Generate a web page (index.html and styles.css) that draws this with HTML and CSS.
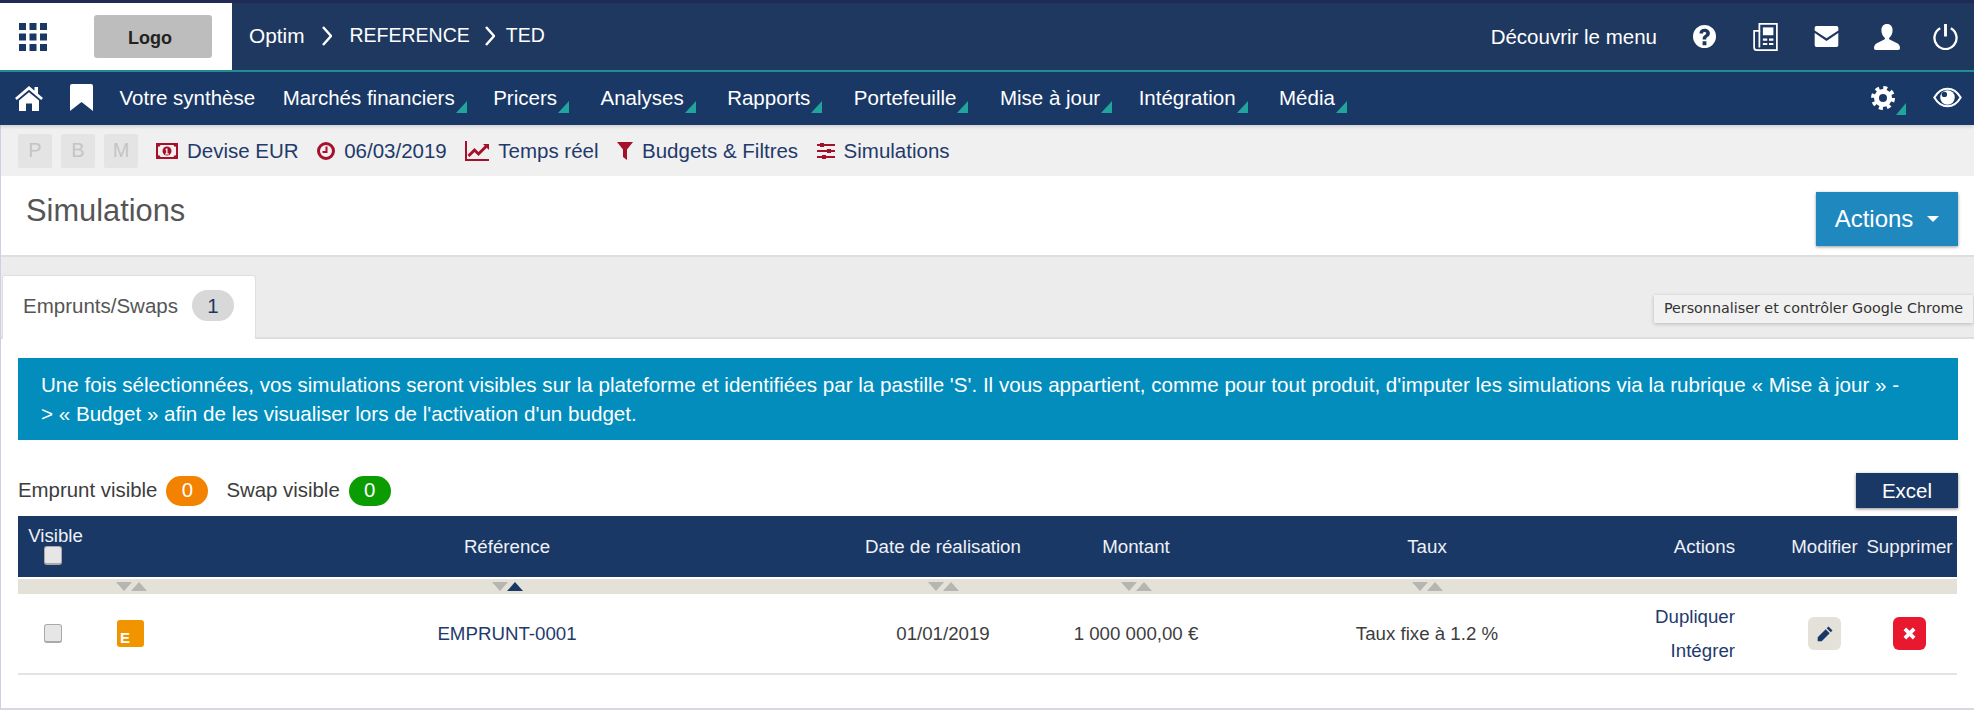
FILE: index.html
```html
<!DOCTYPE html>
<html lang="fr">
<head>
  <meta charset="UTF-8">
  <title>Simulations</title>
  <link rel="stylesheet" href="styles.css">
</head>
<body>
  <div class="page">
    <div class="topbar">
      <div class="brand">
        <svg class="grid-icon" viewBox="0 0 28 28" fill="#1a3866">
          <rect x="0" y="0" width="7" height="7"/><rect x="10.5" y="0" width="7" height="7"/><rect x="21" y="0" width="7" height="7"/>
          <rect x="0" y="10.5" width="7" height="7"/><rect x="10.5" y="10.5" width="7" height="7"/><rect x="21" y="10.5" width="7" height="7"/>
          <rect x="0" y="21" width="7" height="7"/><rect x="10.5" y="21" width="7" height="7"/><rect x="21" y="21" width="7" height="7"/>
        </svg>
        <div class="logo">Logo</div>
      </div>
      <div class="crumbs">
        <span class="crumb-first">Optim</span>
        <svg class="chevron" viewBox="0 0 10 20"><path d="M1 1l8 9-8 9"/></svg>
        <span>REFERENCE</span>
        <svg class="chevron" viewBox="0 0 10 20"><path d="M1 1l8 9-8 9"/></svg>
        <span>TED</span>
      </div>
      <div class="top-tools">
        <span class="discover">Découvrir le menu</span>
        <svg class="tool-help" viewBox="0 0 24 24"><path fill="#fff" fill-rule="evenodd" d="M12 0a12 12 0 1 0 0 24a12 12 0 0 0 0-24zM10 17h4v4h-4zM6.6 8.6C7 5.5 9.300 4 12.200 4c3 0 5.400 1.900 5.400 4.600 0 2.300-1.300 3.200-2.500 4-1 .7-1.300 1.100-1.300 2.400h-3.800c0-2.400.7-3.400 2.100-4.400 1-.7 1.700-1.100 1.700-2 0-.8-.7-1.400-1.700-1.400-1.100 0-1.800.7-2 1.900z"/></svg>
        <svg class="tool-news" viewBox="0 0 28 32" fill="none" stroke="#fff" stroke-width="2"><path d="M7 1h20v30H4a3 3 0 0 1-3-3V9h6z"/><path d="M7 9v19"/><rect x="11" y="5" width="12" height="9" fill="#fff" stroke="none"/><path d="M11 19h5M18 19h5M11 24h5M18 24h5" stroke-width="2.500"/></svg>
        <svg class="tool-mail" viewBox="0 0 27 24"><path fill="#fff" d="M2 0h23a2 2 0 0 1 2 2v3L13.500 14 0 5V2a2 2 0 0 1 2-2z"/><path fill="#fff" d="M0 8l13.500 9L27 8v14a2 2 0 0 1-2 2H2a2 2 0 0 1-2-2z"/></svg>
        <svg class="tool-user" viewBox="0 0 26 26"><path fill="#fff" d="M13 0c3.600 0 5.600 2.700 5.600 6.200 0 3-1.300 6-3.200 7.500-.6.500-.5 1.500.3 1.900l7 3.300c2 1 3.300 2.500 3.300 5.100 0 1.200-.6 2-2 2H2c-1.400 0-2-.8-2-2 0-2.600 1.300-4.100 3.300-5.100l7-3.300c.8-.4.900-1.400.3-1.900C8.700 12.200 7.400 9.200 7.400 6.200 7.400 2.700 9.400 0 13 0z"/></svg>
        <svg class="tool-power" viewBox="0 0 26 28" fill="none" stroke="#fff" stroke-width="2.400"><path d="M7.500 5.500a11.500 11.500 0 1 0 11 0"/><path d="M13 1v13" stroke-width="3"/></svg>
      </div>
    </div>

    <div class="nav">
      <svg class="nav-home" viewBox="0 0 28 26"><path fill="#fff" d="M14 1L0 13l1.800 2L14 4.700 26.200 15l1.800-2-5-4.300V2h-3.500v3.700z"/><path fill="#fff" d="M14 7.200L4 15.600V26h7v-7.500h6V26h7V15.600z"/></svg>
      <svg class="nav-mark" viewBox="0 0 23 27"><path fill="#fff" d="M2 0h19a2 2 0 0 1 2 2v25l-11.500-9L0 27V2a2 2 0 0 1 2-2z"/></svg>
      <a class="nav-plain">Votre synthèse</a>
      <a class="nav-item tight">Marchés financiers</a>
      <a class="nav-item">Pricers</a>
      <a class="nav-item">Analyses</a>
      <a class="nav-item">Rapports</a>
      <a class="nav-item">Portefeuille</a>
      <a class="nav-item tight">Mise à jour</a>
      <a class="nav-item">Intégration</a>
      <a class="nav-item">Média</a>
      <div class="nav-right">
        <span class="nav-gear">
          <svg viewBox="0 0 24 24" fill="none" stroke="#fff"><circle cx="12" cy="12" r="6.500" stroke-width="5"/><circle cx="12" cy="12" r="10" stroke-width="4" stroke-dasharray="3.900 3.950"/></svg>
        </span>
        <svg class="nav-eye" viewBox="0 0 28 20"><path fill="none" stroke="#fff" stroke-width="2" d="M1.300 10C4.500 4.500 9 1.500 14 1.500S23.500 4.500 26.700 10C23.500 15.500 19 18.500 14 18.500S4.500 15.500 1.300 10z"/><circle cx="14" cy="10" r="7" fill="#fff"/><circle cx="11" cy="7" r="2.600" fill="#1a3866"/></svg>
      </div>
    </div>

    <div class="subbar">
      <span class="square">P</span>
      <span class="square">B</span>
      <span class="square">M</span>
      <span class="sub-item first">
        <svg class="ic-money" viewBox="0 0 22 16"><path fill="#a5112b" fill-rule="evenodd" d="M0 0h22v16H0zM2 3.500v9A2 2 0 0 1 4.500 14h13a2 2 0 0 1 2.500-1.500v-9A2 2 0 0 1 17.500 2h-13A2 2 0 0 1 2 3.500z"/><circle cx="11" cy="8" r="4.500" fill="#a5112b"/><path fill="#fff" d="M10 5.500h1.500v5H13V11.500H9v-1h1.200V6.800l-1 .5z"/></svg>
        Devise EUR
      </span>
      <span class="sub-item">
        <svg class="ic-clock" viewBox="0 0 18 18" fill="none" stroke="#a5112b"><circle cx="9" cy="9" r="7.500" stroke-width="3"/><path d="M9.500 4.500V10H5.500" stroke-width="2"/></svg>
        06/03/2019
      </span>
      <span class="sub-item">
        <svg class="ic-chart" viewBox="0 0 24 20" fill="none" stroke="#a5112b"><path d="M1 0v19h23" stroke-width="2"/><path d="M3.500 15l6-6 4 4 8-8" stroke-width="3"/><path d="M18 3h6v6z" fill="#a5112b" stroke="none"/></svg>
        Temps réel
      </span>
      <span class="sub-item">
        <svg class="ic-filter" viewBox="0 0 16 18"><path fill="#a5112b" d="M0 0h16L10 7.500V18L6 15V7.500z"/></svg>
        Budgets &amp; Filtres
      </span>
      <span class="sub-item">
        <svg class="ic-sliders" viewBox="0 0 18 18"><path fill="none" stroke="#a5112b" stroke-width="2" d="M0 3h18M0 9h18M0 15h18"/><path fill="#a5112b" d="M3 1h4v4H3zM10 7h4v4h-4zM5 13h4v4H5z"/></svg>
        Simulations
      </span>
    </div>

    <div class="title-row">
      <h1>Simulations</h1>
      <button class="actions-btn">Actions <span class="caret"></span></button>
    </div>

    <div class="tabs">
      <div class="tab">Emprunts/Swaps <span class="tab-count">1</span></div>
      <div class="tooltip">Personnaliser et contrôler Google Chrome</div>
    </div>

    <div class="content">
      <div class="notice">Une fois sélectionnées, vos simulations seront visibles sur la plateforme et identifiées par la pastille 'S'. Il vous appartient, comme pour tout produit, d'imputer les simulations via la rubrique « Mise à jour » -<br>&gt; « Budget » afin de les visualiser lors de l'activation d'un budget.</div>

      <div class="counts">
        <span>Emprunt visible</span><span class="pill orange">0</span>
        <span class="swap-label">Swap visible</span><span class="pill green">0</span>
        <button class="excel-btn">Excel</button>
      </div>

      <table class="grid">
        <colgroup>
          <col class="c-visible"><col class="c-type"><col class="c-ref"><col class="c-date"><col class="c-amount"><col class="c-rate"><col class="c-actions"><col class="c-edit"><col class="c-del">
        </colgroup>
        <thead>
          <tr class="head">
            <th class="th-visible">Visible<span class="check"></span></th>
            <th></th>
            <th>Référence</th>
            <th>Date de réalisation</th>
            <th>Montant</th>
            <th>Taux</th>
            <th class="th-actions">Actions</th>
            <th>Modifier</th>
            <th>Supprimer</th>
          </tr>
          <tr class="sorts">
            <td></td>
            <td><span class="sort"><i class="down"></i><i class="up"></i></span></td>
            <td><span class="sort"><i class="down"></i><i class="up on"></i></span></td>
            <td><span class="sort"><i class="down"></i><i class="up"></i></span></td>
            <td><span class="sort"><i class="down"></i><i class="up"></i></span></td>
            <td><span class="sort"><i class="down"></i><i class="up"></i></span></td>
            <td></td><td></td><td></td>
          </tr>
        </thead>
        <tbody>
          <tr class="row">
            <td><span class="check"></span></td>
            <td><span class="type-badge">E</span></td>
            <td class="link">EMPRUNT-0001</td>
            <td>01/01/2019</td>
            <td>1 000 000,00 €</td>
            <td>Taux fixe à 1.2 %</td>
            <td class="td-actions"><a>Dupliquer</a><a>Intégrer</a></td>
            <td>
              <span class="square-btn edit">
                <svg viewBox="0 0 16 16"><path fill="#1a3866" d="M11.500 0.500l4 4-1.800 1.800-4-4zM8.700 3.300l4 4-8 8H.7v-4z"/></svg>
              </span>
            </td>
            <td>
              <span class="square-btn del">
                <svg viewBox="0 0 14 14"><path fill="none" stroke="#fff" stroke-width="4" d="M2 2l10 10M12 2L2 12"/></svg>
              </span>
            </td>
          </tr>
        </tbody>
      </table>
    </div>
  </div>
</body>
</html>
```

FILE: styles.css
```css
* {
  box-sizing: border-box;
}
html, body {
  margin: 0;
  height: 100%;
  overflow: hidden;
}
body {
  font-family: "Liberation Sans", Arial, sans-serif;
  font-size: 18.7px;
  color: #3d3d3d;
  background-color: white;
}
.page {
  height: 710px;
  border-left: 1px solid #cfcfe0;
  border-bottom: 2px solid #d8d8e2;
  display: flex;
  flex-direction: column;
}
svg {
  display: block;
  flex: none;
}

/* top bar */
.topbar {
  height: 72px;
  background-color: #1f3860;
  border-top: 3px solid #1f2a55;
  border-bottom: 2px solid #1e8f92;
  display: flex;
  align-items: center;
  color: white;
  font-size: 19.500px;
  margin-left: -1px;
}
.brand {
  width: 232px;
  height: 100%;
  background-color: white;
  display: flex;
  align-items: center;
  padding-left: 19px;
}
.grid-icon {
  width: 28px;
  height: 28px;
}
.logo {
  width: 118px;
  height: 43px;
  margin-left: 47px;
  padding: 3px 6px 0 0;
  background-color: #bdbdbd;
  border-radius: 3px;
  color: #222;
  font-size: 18px;
  font-weight: bold;
  display: flex;
  align-items: center;
  justify-content: center;
}
.crumbs {
  display: flex;
  align-items: center;
  margin-left: 17px;
  margin-bottom: 2px;
}
.crumb-first {
  font-size: 20.800px;
}
.chevron {
  width: 10px;
  height: 20px;
  margin: 0 17px 0 18px;
  fill: none;
  stroke: white;
  stroke-width: 2.400;
}
.chevron + span + .chevron {
  margin: 0 11px 0 15px;
}
.top-tools {
  margin-left: auto;
  display: flex;
  align-items: center;
  padding-right: 16px;
}
.discover {
  font-size: 20.500px;
  margin-right: 36px;
}
.tool-help { width: 23px; height: 23px; margin-right: 36px; }
.tool-news { width: 27px; height: 28px; margin-right: 34px; }
.tool-mail { width: 27px; height: 21px; margin-right: 34px; }
.tool-user { width: 26px; height: 26px; margin-right: 33px; }
.tool-power { width: 25px; height: 27px; }

/* menu */
.nav {
  height: 53px;
  margin-left: -1px;
  background-color: #1a3866;
  display: flex;
  align-items: center;
  color: white;
  font-size: 20.500px;
  padding: 0 0 2px 15px;
  box-shadow: 0 2px 3px rgba(0,0,0,0.12);
  position: relative;
}
.nav-home { width: 28px; height: 26px; margin-right: 27px; }
.nav-mark { width: 23px; height: 27px; margin-right: 26.500px; }
.nav-plain { margin-right: 27.500px; }
.nav-item {
  position: relative;
  margin-right: 43.500px;
}
.nav-item.tight {
  margin-right: 38.500px;
}
.nav-item::after {
  content: "";
  position: absolute;
  right: -12px;
  bottom: -3px;
  border-bottom: 12px solid #1fa59b;
  border-left: 11px solid transparent;
}
.nav-right {
  margin-left: auto;
  display: flex;
  align-items: center;
  padding-right: 12px;
}
.nav-gear {
  position: relative;
  margin-right: 38px;
}
.nav-gear svg {
  width: 24px;
  height: 24px;
}
.nav-gear::after {
  content: "";
  position: absolute;
  right: -11px;
  bottom: -5px;
  border-bottom: 12px solid #1fa59b;
  border-left: 10px solid transparent;
}
.nav-eye { width: 29px; height: 21px; }

/* sub bar */
.subbar {
  height: 51px;
  background-color: #f0f0f0;
  display: flex;
  align-items: center;
  padding-left: 17px;
  color: #1f3a6b;
  font-size: 20.500px;
}
.square {
  width: 34px;
  height: 34px;
  margin-right: 9px;
  background-color: #e4e4e4;
  border-radius: 2px;
  color: #c4c4c4;
  display: flex;
  align-items: center;
  justify-content: center;
  font-size: 20px;
}
.sub-item {
  display: flex;
  align-items: center;
  margin-right: 18.500px;
}
.sub-item svg {
  margin-right: 9px;
}
.sub-item.first {
  margin-left: 9px;
}
.ic-money { width: 22px; height: 16px; }
.ic-clock { width: 18px; height: 18px; }
.ic-chart { width: 24px; height: 20px; }
.ic-filter { width: 16px; height: 18px; }
.ic-sliders { width: 18px; height: 18px; }

/* title */
.title-row {
  height: 81px;
  border-bottom: 2px solid #dedede;
  display: flex;
  align-items: flex-start;
  justify-content: space-between;
  padding: 16px 16px 0 25px;
}
h1 {
  margin: 0;
  font-size: 30.800px;
  font-weight: normal;
  color: #555;
  line-height: 38px;
}
.actions-btn {
  width: 142px;
  height: 54px;
  background-color: #1f88bf;
  border: none;
  box-shadow: 0 1px 3px rgba(0,0,0,0.4);
  color: white;
  font-family: inherit;
  font-size: 24px;
  display: flex;
  align-items: center;
  justify-content: center;
  gap: 14px;
}
.caret {
  border-top: 6px solid white;
  border-left: 6px solid transparent;
  border-right: 6px solid transparent;
}

/* tabs */
.tabs {
  height: 82px;
  background-color: #ececec;
  border-bottom: 2px solid #dedede;
  display: flex;
  align-items: flex-end;
  position: relative;
  padding-left: 1px;
}
.tab {
  width: 254px;
  height: 64px;
  margin-bottom: -2px;
  background-color: white;
  border: 1px solid #dedede;
  border-bottom: none;
  border-radius: 3px 3px 0 0;
  display: flex;
  align-items: center;
  padding: 0 0 4px 20px;
  font-size: 20.500px;
  color: #555;
}
.tab-count {
  width: 42px;
  height: 31px;
  margin-left: 14px;
  border-radius: 16px;
  background-color: #d8d8d8;
  color: #1a3866;
  display: flex;
  align-items: center;
  justify-content: center;
}
.tooltip {
  position: absolute;
  left: 1653px;
  top: 38px;
  width: 319px;
  height: 28px;
  background-color: #f1f1f1;
  box-shadow: 0 1px 4px rgba(0,0,0,0.22);
  font-family: "DejaVu Sans", sans-serif;
  font-size: 14.300px;
  line-height: 27px;
  text-align: center;
  color: #333;
}

/* content */
.content {
  padding: 19px 16px 0 17px;
}
.notice {
  height: 82px;
  background-color: #028dbd;
  color: white;
  font-size: 20.600px;
  line-height: 29px;
  padding: 12px 23px;
}
.counts {
  height: 35px;
  margin-top: 33px;
  display: flex;
  align-items: center;
  font-size: 20.400px;
}
.pill {
  width: 42px;
  height: 30px;
  margin-left: 9px;
  border-radius: 15px;
  color: white;
  display: flex;
  align-items: center;
  justify-content: center;
}
.orange { background-color: #f28200; }
.green { background-color: #0a9c00; }
.swap-label {
  margin-left: 18px;
}
.excel-btn {
  margin-left: auto;
  width: 102px;
  height: 35px;
  background-color: #1a3866;
  border: none;
  box-shadow: 0 1px 3px rgba(0,0,0,0.45);
  color: white;
  font-family: inherit;
  font-size: 20.500px;
}

/* table */
.grid {
  width: 1939px;
  margin-top: 8px;
  border-collapse: collapse;
  table-layout: fixed;
}
.c-visible { width: 70px; }
.c-type { width: 86px; }
.c-ref { width: 666px; }
.c-date { width: 206px; }
.c-amount { width: 180px; }
.c-rate { width: 402px; }
.c-actions { width: 159px; }
.c-edit { width: 75px; }
.c-del { width: 95px; }
.grid th, .grid td {
  padding: 0;
  text-align: center;
  font-weight: normal;
}
.head {
  height: 62px;
  background-color: #1a3866;
  color: #eef1f6;
  border-bottom: 2px solid white;
}
.th-visible {
  line-height: 20px;
  vertical-align: top;
  padding-top: 10px !important;
  text-indent: 5px;
}
.th-actions, .td-actions {
  text-align: right !important;
  padding-right: 52px !important;
}
.check {
  display: block;
  width: 18px;
  height: 19px;
  margin: 0 auto;
  background-color: #e6e6e6;
  border: 1px solid #a9a9a9;
  border-bottom-width: 2px;
  border-radius: 3px;
}
.sorts {
  height: 16px;
  background-color: #e3e1d8;
}
.sorts td {
  line-height: 0;
  font-size: 0;
  vertical-align: top;
  padding-top: 3px !important;
}
.sort {
  display: inline-flex;
  vertical-align: top;
}
.sort i {
  display: block;
  border-left: 8px solid transparent;
  border-right: 8px solid transparent;
}
.sort .down { border-top: 9px solid #b5b5b2; }
.sort .up { border-bottom: 9px solid #b5b5b2; margin-left: -1px; }
.sort .up.on { border-bottom-color: #1a3866; }
.row {
  height: 80px;
  border-bottom: 2px solid #e4e4e4;
  color: #3d3d3d;
}
.type-badge {
  display: flex;
  align-items: flex-end;
  width: 27px;
  height: 27px;
  margin-left: 29px;
  padding: 0 0 2px 3px;
  background-color: #f09400;
  border-radius: 3px;
  color: white;
  font-size: 15px;
  font-weight: bold;
  line-height: 15px;
}
.link, .td-actions a {
  color: #1f3a6b;
}
.td-actions a {
  display: block;
  line-height: 34px;
}
.square-btn {
  display: flex;
  align-items: center;
  justify-content: center;
  width: 33px;
  height: 33px;
  margin: 0 auto;
  border-radius: 6px;
}
.edit { background-color: #e3e1d8; }
.del { background-color: #e8192f; }
.edit svg { width: 16px; height: 16px; }
.del svg { width: 13px; height: 13px; }
```
